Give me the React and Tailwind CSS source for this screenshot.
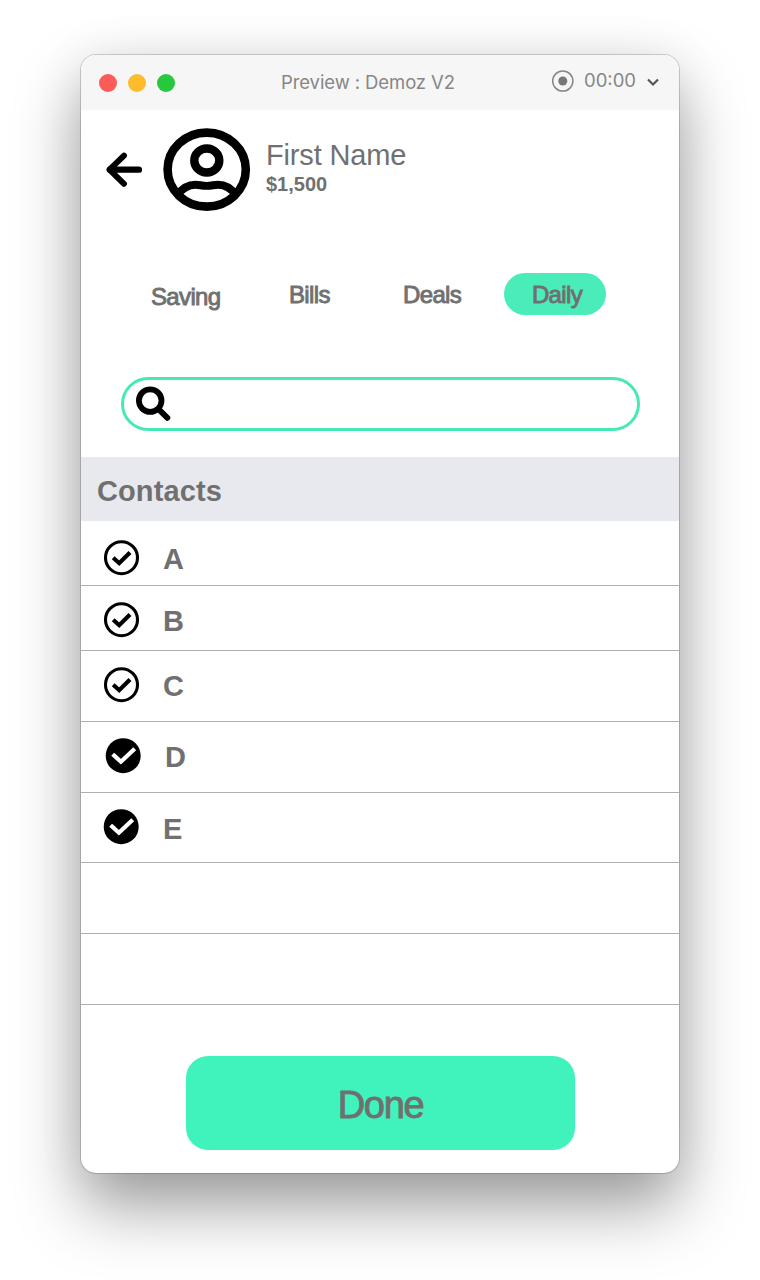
import React from "react";

const ARIAL = "font-['Liberation_Sans',Arial,sans-serif]";

function CheckCircle({ filled }) {
  return (
    <svg className="h-9 w-9 shrink-0" viewBox="0 0 36 36" fill="none">
      <circle cx={filled ? 18.2 : 18.5} cy="17.7" r={filled ? 17.5 : 16} fill={filled ? "#000" : "none"} stroke="#000" strokeWidth={filled ? 0 : 3.1} />
      <path
        d={filled ? "M9.2 17.6L15.9 23.7L28.2 12.2" : "M10.2 17.8L16.2 23.2L27 12.6"}
        stroke={filled ? "#fff" : "#000"}
        strokeWidth={filled ? 4.7 : 4.2}
        strokeLinecap={filled ? "square" : "butt"}
        className={filled ? "[stroke-width:4.2px]" : ""}
      />
    </svg>
  );
}

function Avatar() {
  return (
    <svg className="h-[83px] w-[89px] shrink-0" viewBox="0 0 89 83" fill="none" stroke="#000">
      <ellipse cx="44.7" cy="41.6" rx="39.1" ry="37" strokeWidth="8.6" />
      <ellipse cx="44.8" cy="32.5" rx="12.5" ry="12" strokeWidth="8.4" />
      <path d="M15.5 67C20 60.5 26.5 56.7 33.5 56.7C37.5 56.7 39.5 57.9 44.7 57.9S52 56.7 56 56.7C63 56.7 69.4 60.5 73.9 67" strokeWidth="7.9" />
    </svg>
  );
}

const tabClass = "tracking-[-0.65px] text-[24px] leading-7 [-webkit-text-stroke:0.9px_#707070]";

const rows = [
  { label: "A", filled: false, row: "h-[65px] pt-[19px] pl-[22px]", text: "pt-[4px]" },
  { label: "B", filled: false, row: "h-[65px] pt-[16px] pl-[22px]", text: "pt-[4px]" },
  { label: "C", filled: false, row: "h-[71px] pt-[16px] pl-[22px]", text: "pt-[4px]" },
  { label: "D", filled: true, row: "h-[71px] pt-[16px] pl-[24px]", text: "pt-[4px]" },
  { label: "E", filled: true, row: "h-[70px] pt-[16px] pl-[22px]", text: "pt-[5px]" },
  { label: "", row: "h-[71px]" },
  { label: "", row: "h-[71px]" },
];

export default function App() {
  return (
    <div className={`h-[1280px] w-[760px] overflow-hidden bg-white pt-[55px] pl-[81px] text-[#707070] ${ARIAL}`}>
      <div className="flex h-[1118px] w-[598px] flex-col rounded-[15px] bg-white shadow-[0_0_0_1px_rgba(0,0,0,0.17),0_34px_66px_rgba(0,0,0,0.38),0_0_50px_rgba(0,0,0,0.07)]">
        <header className="flex h-[55px] shrink-0 items-center rounded-t-[15px] bg-[#f6f6f6] pl-[18px] font-['Inter',sans-serif] text-[#868686]">
          <div className="flex gap-[11px]">
            <span className="h-[18px] w-[18px] rounded-full bg-[#fc5b57]" />
            <span className="h-[18px] w-[18px] rounded-full bg-[#fdbb2e]" />
            <span className="h-[18px] w-[18px] rounded-full bg-[#27c840]" />
          </div>
          <h1 className="mb-[2px] ml-[106px] w-[270px] text-[18.5px] leading-6 tracking-[-0.1px] whitespace-nowrap">Preview : Demoz V2</h1>
          <svg className="mb-1 h-6 w-6" viewBox="0 0 24 24" fill="none">
            <circle cx="11.8" cy="12" r="10.1" stroke="#868686" strokeWidth="1.5" />
            <circle cx="11.8" cy="12" r="4.5" fill="#777" />
          </svg>
          <span className="mb-[6px] ml-[9px] w-[61px] text-[18.5px] leading-6">00:00</span>
          <svg className="mb-[2px] h-4 w-4" viewBox="0 0 16 16" fill="none" stroke="#555" strokeWidth="2.2">
            <path d="M3 5.5L8 10.5L13 5.5" />
          </svg>
        </header>

        <section className="flex h-[163px] shrink-0 pt-[18px] pl-[25px]">
          <svg className="mt-[23px] h-9 w-9" viewBox="0 0 36 36" fill="none" stroke="#000" strokeLinecap="round" strokeLinejoin="round">
            <path d="M4 18.7H33" strokeWidth="6.3" />
            <path d="M18 4.6L3.5 18.7L18 32.8" strokeWidth="5.9" />
          </svg>
          <div className="ml-[20px]"><Avatar /></div>
          <div className="ml-[15px] pt-[10px]">
            <p className="text-[29px] leading-[34px] tracking-[-0.15px]">First Name</p>
            <p className="pt-px text-[20px] leading-[22px] font-bold">$1,500</p>
          </div>
        </section>

        <nav className="flex h-[42px] shrink-0 items-center pl-[70px]">
          <span className={`mt-[5px] w-[138px] ${tabClass}`}>Saving</span>
          <span className={`mt-[2px] w-[114px] ${tabClass}`}>Bills</span>
          <span className={`mt-[2px] w-[101px] ${tabClass}`}>Deals</span>
          <span className="flex h-[42px] w-[102px] items-center justify-center rounded-full bg-[#4aedb9]">
            <span className={`mt-[2px] ml-[4px] ${tabClass}`}>Daily</span>
          </span>
        </nav>

        <div className="mt-[62px] ml-[40px] flex h-[54px] w-[519px] shrink-0 items-center rounded-full border-[3px] border-[#46e8b5] pl-[11px]">
          <svg className="h-9 w-9" viewBox="0 0 36 36" fill="none" stroke="#000">
            <circle cx="15.2" cy="14.6" r="11.3" strokeWidth="5.8" />
            <path d="M23.5 23.2L32.4 31.8" strokeWidth="5.8" strokeLinecap="round" />
          </svg>
        </div>

        <h2 className="mt-[26px] h-[64px] shrink-0 bg-[#e8e9ef] pt-[18px] pl-[16px] text-[29px] leading-[33px] font-bold tracking-[0.1px]">Contacts</h2>
        <ul className="shrink-0">
          {rows.map((r, i) => (
            <li key={i} className={`flex items-start gap-[24px] border-b border-[#b0b0b0] ${r.row}`}>
              {r.label && <CheckCircle filled={r.filled} />}
              {r.label && <span className={`text-[29px] leading-[30px] font-bold ${r.text}`}>{r.label}</span>}
            </li>
          ))}
        </ul>

        <button className="mt-[51px] ml-[105px] h-[94px] w-[389px] shrink-0 rounded-[22px] bg-[#40f3bd] pt-[4px] text-[38px] tracking-[-1.3px] [-webkit-text-stroke:0.9px_#707070]">
          Done
        </button>
      </div>
    </div>
  );
}
